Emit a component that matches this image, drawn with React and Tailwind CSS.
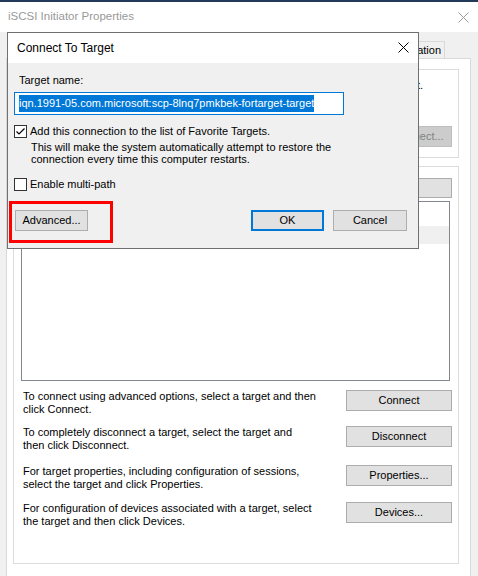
import React from "react";

const font = { fontFamily: '"Liberation Sans", Arial, sans-serif' };

function Btn({ children, className = "" }) {
  return (
    <div
      className={
        "flex items-center justify-center bg-[#e1e1e1] border border-[#adadad] text-[11px] text-black leading-none " +
        className
      }
    >
      {children}
    </div>
  );
}

function XIcon({ size, color }) {
  return (
    <svg width={size} height={size} viewBox={`0 0 ${size} ${size}`} className="block">
      <path d={`M0.5 0.5 L${size - 0.5} ${size - 0.5} M${size - 0.5} 0.5 L0.5 ${size - 0.5}`} stroke={color} strokeWidth="1" fill="none" />
    </svg>
  );
}

function Row({ lines, label, className = "" }) {
  return (
    <div className={"flex items-start justify-between " + className}>
      <div className="pl-[9px] text-[11px] leading-[13px] text-black whitespace-nowrap">
        <div>{lines[0]}</div>
        <div>{lines[1]}</div>
      </div>
      <Btn className="w-[106px] h-[21px] mr-[6px]">{label}</Btn>
    </div>
  );
}

export default function App() {
  return (
    <div className="relative w-[478px] h-[576px] overflow-hidden bg-[#f0f0f0]" style={font}>
      {/* main window */}
      <div className="h-[2px] bg-[#23395a]" />
      <div className="h-[30px] bg-white flex items-center justify-between pl-[8px] pr-[9px]">
        <span className="text-[11.5px] text-[#999999] leading-none">iSCSI Initiator Properties</span>
        <XIcon size={11} color="#9a9a9a" />
      </div>
      <div className="pt-[9px] pl-[6px] pr-[7px]">
        {/* tabs */}
        <div className="flex justify-end pr-[26px] h-[17px]">
          <div className="border border-b-0 border-[#d9d9d9] bg-[#f0f0f0] pl-[6px] pr-[3px] pt-[3px] text-[11px] leading-none text-black">
            Configuration
          </div>
        </div>
        {/* panel */}
        <div className="border border-[#d9d9d9] bg-white h-[540px] pl-[6px] pr-[11px] pt-[10px]">
          {/* group 1 */}
          <div className="relative border border-[#dcdcdc] h-[89px] pt-[9px] pl-[8px] pr-[35px]">
            <div className="text-right text-[11px] leading-[13px] text-black whitespace-nowrap overflow-hidden">
              the target and then click Quick Connect.
            </div>
            <div className="flex justify-end mt-[34px] -mr-[29px]">
              <div className="w-[106px] h-[21px] flex items-center justify-center pl-[8px] bg-[#cccccc] border border-[#bfbfbf] text-[11px] text-[#838383] leading-none">
                Quick Connect...
              </div>
            </div>
          </div>
          {/* group 2 */}
          <div className="mt-[8px] border border-[#dcdcdc] h-[398px] pt-[11px]">
            <div className="flex justify-end">
              <Btn className="w-[106px] h-[20px] mr-[6px]">Refresh</Btn>
            </div>
            <div className="mt-[3px] ml-[7px] mr-[8px] h-[180px] border border-[#828790] bg-white pt-[24px]">
              <div className="h-[18px] bg-[#f0f0f0]" />
            </div>
            <Row
              className="mt-[9px]"
              label="Connect"
              lines={["To connect using advanced options, select a target and then", "click Connect."]}
            />
            <Row
              className="mt-[10px]"
              label="Disconnect"
              lines={["To completely disconnect a target, select the target and", "then click Disconnect."]}
            />
            <Row
              className="mt-[13px]"
              label="Properties..."
              lines={["For target properties, including configuration of sessions,", "select the target and click Properties."]}
            />
            <Row
              className="mt-[11px]"
              label="Devices..."
              lines={["For configuration of devices associated with a target, select", "the target and then click Devices."]}
            />
          </div>
        </div>
      </div>

      {/* Connect To Target dialog (overlay) */}
      <div className="absolute left-[7px] top-[32px] w-[412px] h-[217px] border border-[#707070] bg-[#f0f0f0] flex flex-col">
        <div className="h-[30px] bg-white flex items-center justify-between pl-[9px] pr-[9px]">
          <span className="text-[12px] text-black leading-none">Connect To Target</span>
          <div className="-mt-[2px]">
            <XIcon size={11} color="#000000" />
          </div>
        </div>
        <div className="pl-[6px] pr-[6px]">
          <div className="pl-[5px] mt-[11px] text-[11px] leading-[13px] text-black">Target name:</div>
          <div className="mt-[5px] w-[330px] h-[23px] border border-[#0078d7] bg-white flex items-center pl-[4px]">
            <span className="bg-[#0078d7] text-white text-[11px] leading-[17px] h-[17px] whitespace-nowrap">
              iqn.1991-05.com.microsoft:scp-8lnq7pmkbek-fortarget-target
            </span>
          </div>
          <div className="mt-[10px] flex items-start">
            <div className="w-[13px] h-[13px] border border-[#333333] bg-white flex items-center justify-center shrink-0">
              <svg width="11" height="11" viewBox="0 0 11 11" className="block">
                <path d="M1.5 5.5 L4 8 L9.5 2.5" stroke="#000" strokeWidth="1.2" fill="none" />
              </svg>
            </div>
            <div className="ml-[3px] text-[11px] leading-[13px] text-black">
              <div>Add this connection to the list of Favorite Targets.</div>
              <div className="mt-[3px] ml-[1px] leading-[12px]">
                <div>This will make the system automatically attempt to restore the</div>
                <div>connection every time this computer restarts.</div>
              </div>
            </div>
          </div>
          <div className="mt-[13px] flex items-start">
            <div className="w-[13px] h-[13px] border border-[#333333] bg-white shrink-0" />
            <div className="ml-[3px] text-[11px] leading-[13px] text-black">Enable multi-path</div>
          </div>
          <div className="mt-[19px] flex items-center">
            <Btn className="w-[73px] h-[21px] ml-[1px]">Advanced...</Btn>
            <div className="flex-1" />
            <div className="w-[73px] h-[21px] flex items-center justify-center bg-[#e1e1e1] border-2 border-[#0078d7] text-[11px] text-black leading-none">
              OK
            </div>
            <Btn className="w-[74px] h-[21px] ml-[9px] mr-[5px]">Cancel</Btn>
          </div>
        </div>
      </div>

      {/* red highlight annotation */}
      <div className="absolute left-[9px] top-[201px] w-[104px] h-[42px] border-[3px] border-[#ff0000]" />
    </div>
  );
}
